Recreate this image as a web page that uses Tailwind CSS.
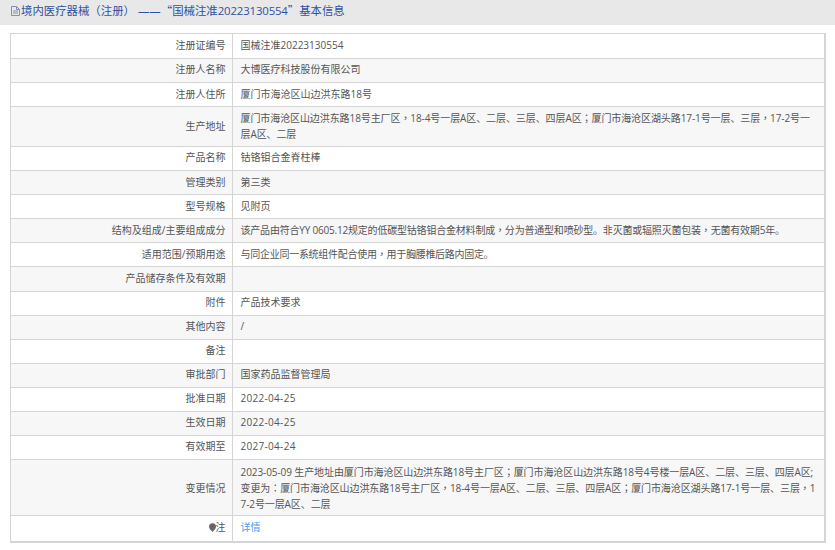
<!DOCTYPE html>
<html><head><meta charset="utf-8">
<script src="https://cdn.jsdelivr.net/npm/@tailwindcss/browser@4"></script>
</head>
<body class="bg-white overflow-hidden font-['Open_Sans','Noto_Sans_CJK_SC',sans-serif] text-[10px] leading-4 text-[#555]">
<div class="h-[25px] bg-[#e8e8e8] flex items-center pl-[11px] pb-1 text-[11.4px] text-[#2f51a3]">
<svg class="w-[9px] h-[10px] mr-[1px] shrink-0" viewBox="0 0 9 10" fill="none" stroke="#7f8fb5" stroke-width="1"><path d="M.5.5h5l3 3v6h-8zM5.500.5v3h3M2 5h5M2 7h5"/></svg>
<span>境内医疗器械<span class="font-['Noto_Sans_CJK_TC']">（</span>注册<span class="font-['Noto_Sans_CJK_TC']">）</span><span class="ml-[3px]">——</span><span class="font-['Noto_Sans_CJK_SC']">“</span>国械注准<span class="tracking-[-0.15px]">20223130554</span><span class="font-['Noto_Sans_CJK_SC']">”</span>基本信息</span>
</div>
<div class="mt-[8px] ml-[10px] mr-[9px] border-r-2 border-l border-b-2 border-[#d5d5d5]">
<table class="w-full border-collapse table-fixed">
<colgroup><col class="w-[221px]"><col></colgroup>
<tbody>
<tr class="h-[25px] border-t border-[#d5d5d5]"><td class="text-right pr-[6px] pb-[2px] border-r border-[#d5d5d5]">注册证编号</td><td class="pl-[8px] pr-[7px] pb-[2px]">国械注准20223130554</td></tr>
<tr class="h-6 border-t border-[#d5d5d5] bg-[#f7f7f7]"><td class="text-right pr-[6px] pb-1 border-r border-[#d5d5d5]">注册人名称</td><td class="pl-[8px] pr-[7px] pb-1">大博医疗科技股份有限公司</td></tr>
<tr class="h-6 border-t border-[#d5d5d5]"><td class="text-right pr-[6px] pb-[2px] border-r border-[#d5d5d5]">注册人住所</td><td class="pl-[8px] pr-[7px] pb-[2px]">厦门市海沧区山边洪东路18号</td></tr>
<tr class="h-10 border-t border-[#d5d5d5] bg-[#f7f7f7]"><td class="text-right pr-[6px] pb-[2px] border-r border-[#d5d5d5]">生产地址</td><td class="pl-[8px] pr-[7px] pb-[2px] break-all tracking-[-0.09px]">厦门市海沧区山边洪东路18号主厂区<span class="font-['Noto_Sans_CJK_TC']">，</span>18-4号一层A区、二层、三层、四层A区<span class="font-['Noto_Sans_CJK_TC']">；</span>厦门市海沧区湖头路17-1号一层、三层<span class="font-['Noto_Sans_CJK_TC']">，</span>17-2号一层A区、二层</td></tr>
<tr class="h-6 border-t border-[#d5d5d5]"><td class="text-right pr-[6px] pb-1 border-r border-[#d5d5d5]">产品名称</td><td class="pl-[8px] pr-[7px] pb-1">钴铬钼合金脊柱棒</td></tr>
<tr class="h-6 border-t border-[#d5d5d5] bg-[#f7f7f7]"><td class="text-right pr-[6px] pb-[2px] border-r border-[#d5d5d5]">管理类别</td><td class="pl-[8px] pr-[7px] pb-[2px]">第三类</td></tr>
<tr class="h-6 border-t border-[#d5d5d5]"><td class="text-right pr-[6px] pb-[2px] border-r border-[#d5d5d5]">型号规格</td><td class="pl-[8px] pr-[7px] pb-[2px]">见附页</td></tr>
<tr class="h-6 border-t border-[#d5d5d5] bg-[#f7f7f7]"><td class="text-right pr-[6px] pb-[2px] border-r border-[#d5d5d5]">结构及组成/主要组成成分</td><td class="pl-[8px] pr-[7px] pb-[2px] tracking-[-0.2px]">该产品由符合YY 0605.12规定的低碳型钴铬钼合金材料制成<span class="font-['Noto_Sans_CJK_TC']">，</span>分为普通型和喷砂型。非灭菌或辐照灭菌包装<span class="font-['Noto_Sans_CJK_TC']">，</span>无菌有效期5年。</td></tr>
<tr class="h-6 border-t border-[#d5d5d5]"><td class="text-right pr-[6px] pb-[2px] border-r border-[#d5d5d5]">适用范围/预期用途</td><td class="pl-[8px] pr-[7px] pb-[2px] tracking-[-0.27px]">与同企业同一系统组件配合使用<span class="font-['Noto_Sans_CJK_TC']">，</span>用于胸腰椎后路内固定。</td></tr>
<tr class="h-[25px] border-t border-[#d5d5d5] bg-[#f7f7f7]"><td class="text-right pr-[6px] pb-[2px] border-r border-[#d5d5d5]">产品储存条件及有效期</td><td class="pl-[8px] pr-[7px] pb-[2px]"></td></tr>
<tr class="h-6 border-t border-[#d5d5d5]"><td class="text-right pr-[6px] pb-1 border-r border-[#d5d5d5]">附件</td><td class="pl-[8px] pr-[7px] pb-1">产品技术要求</td></tr>
<tr class="h-6 border-t border-[#d5d5d5] bg-[#f7f7f7]"><td class="text-right pr-[6px] pb-1 border-r border-[#d5d5d5]">其他内容</td><td class="pl-[8px] pr-[7px] pb-1">/</td></tr>
<tr class="h-6 border-t border-[#d5d5d5]"><td class="text-right pr-[6px] pb-1 border-r border-[#d5d5d5]">备注</td><td class="pl-[8px] pr-[7px] pb-1"></td></tr>
<tr class="h-6 border-t border-[#d5d5d5] bg-[#f7f7f7]"><td class="text-right pr-[6px] pb-1 border-r border-[#d5d5d5]">审批部门</td><td class="pl-[8px] pr-[7px] pb-1">国家药品监督管理局</td></tr>
<tr class="h-6 border-t border-[#d5d5d5]"><td class="text-right pr-[6px] pb-1 border-r border-[#d5d5d5]">批准日期</td><td class="pl-[8px] pr-[7px] pb-1 tracking-[0.3px]">2022-04-25</td></tr>
<tr class="h-6 border-t border-[#d5d5d5] bg-[#f7f7f7]"><td class="text-right pr-[6px] pb-1 border-r border-[#d5d5d5]">生效日期</td><td class="pl-[8px] pr-[7px] pb-1 tracking-[0.3px]">2022-04-25</td></tr>
<tr class="h-6 border-t border-[#d5d5d5]"><td class="text-right pr-[6px] pb-1 border-r border-[#d5d5d5]">有效期至</td><td class="pl-[8px] pr-[7px] pb-1 tracking-[0.3px]">2027-04-24</td></tr>
<tr class="h-14 border-t border-[#d5d5d5] bg-[#f7f7f7]"><td class="text-right pr-[6px] border-r border-[#d5d5d5]">变更情况</td><td class="pl-[8px] pr-[7px] break-all tracking-[-0.09px]">2023-05-09 生产地址由厦门市海沧区山边洪东路18号主厂区<span class="font-['Noto_Sans_CJK_TC']">；</span>厦门市海沧区山边洪东路18号4号楼一层A区、二层、三层、四层A区;变更为<span class="font-['Noto_Sans_CJK_TC']">：</span>厦门市海沧区山边洪东路18号主厂区<span class="font-['Noto_Sans_CJK_TC']">，</span>18-4号一层A区、二层、三层、四层A区<span class="font-['Noto_Sans_CJK_TC']">；</span>厦门市海沧区湖头路17-1号一层、三层<span class="font-['Noto_Sans_CJK_TC']">，</span>17-2号一层A区、二层</td></tr>
<tr class="h-[25px] border-t border-[#d5d5d5]"><td class="text-right pr-[6px] pb-[2px] border-r border-[#d5d5d5]"><svg class="inline-block w-[7px] h-[9px] align-[-1px]" viewBox="0 0 8 10"><path d="M4 0a4 4 0 0 1 4 4c0 2.500-2.500 4-4 6C2.500 8 0 6.500 0 4a4 4 0 0 1 4-4z" fill="#666"/></svg>注</td><td class="pl-[8px] pr-[7px] pb-[2px]"><a class="text-[#4a9cf0]">详情</a></td></tr>
</tbody></table>
</div>
</body></html>
